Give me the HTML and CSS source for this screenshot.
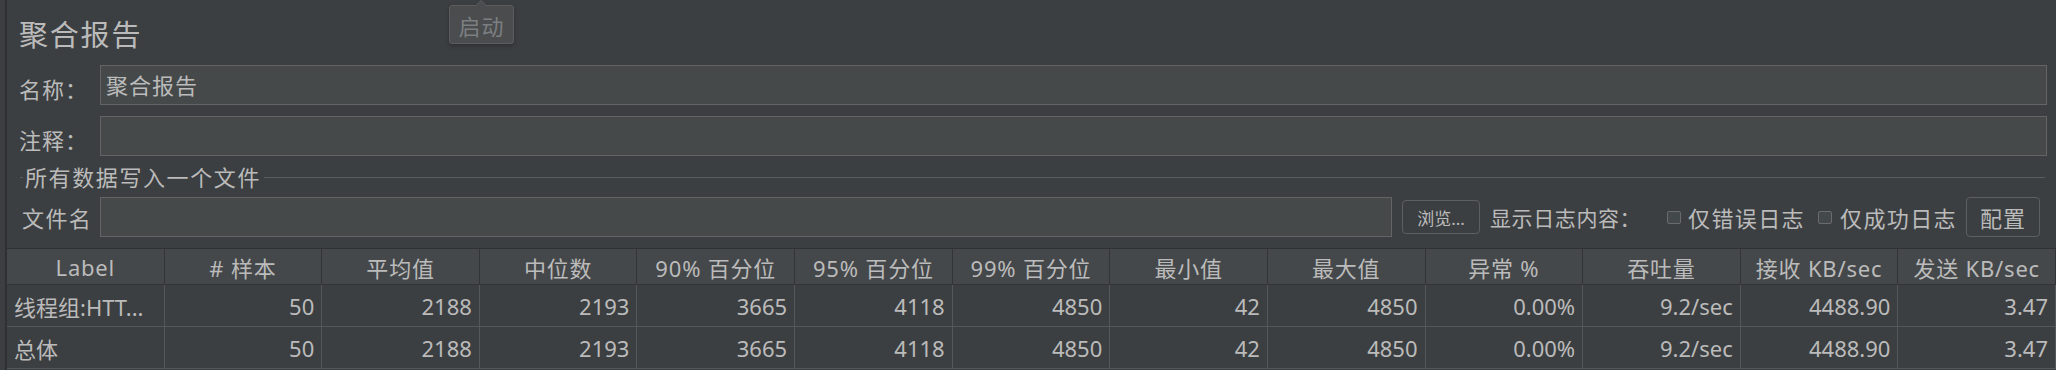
FILE: index.html
```html
<!DOCTYPE html>
<html lang="zh-CN">
<head>
<meta charset="utf-8">
<title>聚合报告</title>
<link rel="stylesheet" href="styles.css">
</head>
<body>
<div class="panel">
  <div class="title">聚合报告</div>

  <div class="row">
    <span class="lbl">名称：</span>
    <div class="field">聚合报告</div>
  </div>
  <div class="row row-comment">
    <span class="lbl">注释：</span>
    <div class="field"></div>
  </div>

  <div class="legend">
    <span class="lead"></span>
    <span class="legend-text">所有数据写入一个文件</span>
    <span class="rule"></span>
  </div>

  <div class="file-row">
    <span class="file-lbl">文件名</span>
    <div class="field file-field"></div>
    <button class="btn btn-browse">浏览...</button>
    <span class="log-lbl">显示日志内容：</span>
    <span class="check check-err"><span class="box"></span><span class="check-text">仅错误日志</span></span>
    <span class="check check-ok"><span class="box"></span><span class="check-text">仅成功日志</span></span>
    <button class="btn btn-config">配置</button>
  </div>

  <div class="table">
    <div class="th">Label</div>
    <div class="th"># 样本</div>
    <div class="th">平均值</div>
    <div class="th">中位数</div>
    <div class="th">90% 百分位</div>
    <div class="th">95% 百分位</div>
    <div class="th">99% 百分位</div>
    <div class="th">最小值</div>
    <div class="th">最大值</div>
    <div class="th">异常 %</div>
    <div class="th">吞吐量</div>
    <div class="th">接收 KB/sec</div>
    <div class="th">发送 KB/sec</div>

    <div class="td first">线程组:HTT...</div>
    <div class="td">50</div>
    <div class="td">2188</div>
    <div class="td">2193</div>
    <div class="td">3665</div>
    <div class="td">4118</div>
    <div class="td">4850</div>
    <div class="td">42</div>
    <div class="td">4850</div>
    <div class="td">0.00%</div>
    <div class="td">9.2/sec</div>
    <div class="td">4488.90</div>
    <div class="td">3.47</div>

    <div class="td first">总体</div>
    <div class="td">50</div>
    <div class="td">2188</div>
    <div class="td">2193</div>
    <div class="td">3665</div>
    <div class="td">4118</div>
    <div class="td">4850</div>
    <div class="td">42</div>
    <div class="td">4850</div>
    <div class="td">0.00%</div>
    <div class="td">9.2/sec</div>
    <div class="td">4488.90</div>
    <div class="td">3.47</div>
  </div>

  <div class="tooltip">启动</div>
</div>
</body>
</html>
```

FILE: styles.css
```css
html, body {
  margin: 0;
  padding: 0;
  background: #3c3f41;
  width: 2056px;
  height: 370px;
  overflow: hidden;
}

body {
  font-family: "Noto Sans", "Noto Sans CJK SC", sans-serif;
  color: #bbbbbb;
  font-size: 22px;
}

.panel {
  position: relative;
  margin-left: 5px;
  border-left: 2px solid #2e3032;
  height: 370px;
  padding-top: 15px;
  box-sizing: border-box;
}

.title {
  height: 40px;
  line-height: 40px;
  padding-left: 12px;
  font-size: 29px;
  letter-spacing: 1.8px;
  color: #bbbbbb;
}

.row {
  display: flex;
  align-items: center;
  margin-top: 10px;
  padding-left: 12px;
  padding-right: 9px;
  height: 40px;
}

.row-comment {
  margin-top: 11px;
}

.lbl {
  width: 81px;
  flex: none;
  letter-spacing: 1px;
  padding-top: 6px;
}

.field {
  flex: 1;
  height: 40px;
  box-sizing: border-box;
  background: #45494a;
  border: 1px solid #646464;
  padding-left: 5px;
  line-height: 38px;
  letter-spacing: 1px;
}

.legend {
  display: flex;
  align-items: center;
  margin-top: 10px;
  height: 22px;
  padding-left: 13px;
  padding-right: 11px;
}

.lead {
  width: 3px;
  height: 1px;
  background: #5a5d5f;
  margin-right: 2px;
}

.legend-text {
  letter-spacing: 1.6px;
  line-height: 22px;
}

.rule {
  flex: 1;
  height: 1px;
  background: #5a5d5f;
  margin-left: 3px;
}

.file-row {
  display: flex;
  align-items: center;
  margin-top: 9px;
  height: 40px;
  padding-left: 15px;
  padding-right: 16px;
}

.file-lbl {
  width: 78px;
  flex: none;
  letter-spacing: 1.4px;
}

.file-field {
  flex: 1;
}

.btn {
  flex: none;
  box-sizing: border-box;
  background: #3c3f41;
  border: 1px solid #5e6060;
  border-radius: 4px;
  color: #bbbbbb;
  font-family: "Noto Sans", "Noto Sans CJK SC", sans-serif;
  padding: 0;
  margin: 0;
}

.btn-browse {
  margin-left: 10px;
  width: 78px;
  height: 34px;
  font-size: 17px;
}

.btn-config {
  width: 74px;
  height: 40px;
  font-size: 22px;
  letter-spacing: 1px;
}

.log-lbl {
  flex: none;
  margin-left: 10px;
  width: 177px;
  font-size: 21px;
  letter-spacing: 0.6px;
  white-space: nowrap;
}

.check {
  flex: none;
  display: flex;
  align-items: center;
}

.check-err {
  width: 151px;
}

.check-ok {
  width: 148px;
}

.box {
  width: 14px;
  height: 13px;
  box-sizing: border-box;
  border: 1px solid #6b6b6b;
  border-radius: 2px;
  background: #43494a;
  margin-right: 7px;
}

.check-ok .box {
  margin-right: 8px;
}

.check-text {
  letter-spacing: 1.4px;
  white-space: nowrap;
}

.table {
  margin-top: 11px;
  display: grid;
  grid-template-columns: repeat(13, 1fr);
  grid-template-rows: 36px 42px 42px;
  border-top: 1px solid #2f3133;
}

.th {
  background: #45484a;
  border-right: 1px solid #323437;
  border-bottom: 1px solid #323437;
  display: flex;
  align-items: center;
  justify-content: center;
  white-space: nowrap;
  overflow: hidden;
  letter-spacing: 0.8px;
}

.td {
  background: #3c3f41;
  border-right: 1px solid #55585b;
  border-bottom: 1px solid #55585b;
  display: flex;
  align-items: center;
  justify-content: flex-end;
  padding-right: 7px;
  white-space: nowrap;
  overflow: hidden;
}

.td.first {
  justify-content: flex-start;
  padding-left: 7px;
  padding-right: 0;
}

.tooltip {
  position: absolute;
  left: 442px;
  top: 5px;
  width: 65px;
  height: 39px;
  box-sizing: border-box;
  background: #4a4c4d;
  border: 1px solid #5a5c5d;
  border-radius: 3px;
  color: #7c7f82;
  font-size: 22px;
  letter-spacing: 1px;
  display: flex;
  align-items: center;
  justify-content: center;
  box-shadow: 0 2px 4px rgba(0, 0, 0, 0.25);
}

.tooltip::before {
  content: "";
  position: absolute;
  top: -6px;
  left: 25px;
  border-left: 6px solid transparent;
  border-right: 6px solid transparent;
  border-bottom: 6px solid #5a5c5d;
}

.tooltip::after {
  content: "";
  position: absolute;
  top: -5px;
  left: 26px;
  border-left: 5px solid transparent;
  border-right: 5px solid transparent;
  border-bottom: 5px solid #4a4c4d;
}
```
